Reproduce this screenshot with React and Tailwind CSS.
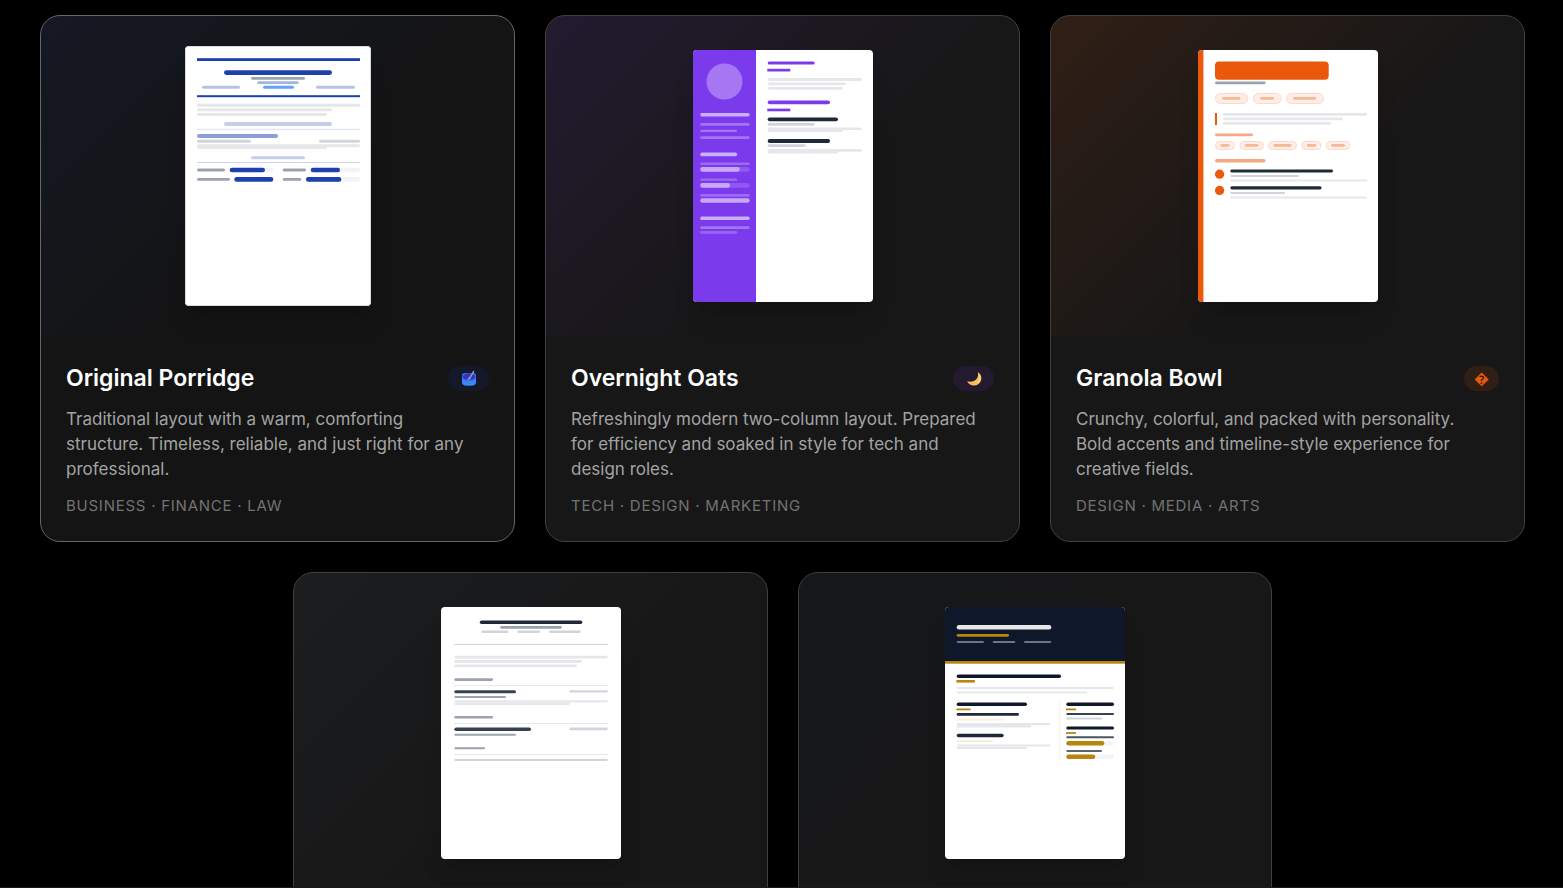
import React from 'react';
import clsx from 'clsx';

const BLUE = '#1e40af';
const PURPLE = '#7c3aed';
const ORANGE = '#ea580c';
const GOLD = '#b8860b';
const NAVY = '#0f172a';
const INK = '#1f2937';
const TEXT = '#e5e7eb';
const META = '#d1d5db';
const MUTED = '#9ca3af';
const TRACK = '#f3f4f6';

// Every bar is [x, y, width, height, fill]
const Bars = ({ items, square }) =>
    items.map(([x, y, w, h, fill], i) => (
        <rect key={i} x={x} y={y} width={w} height={h} rx={square ? 0 : h / 2} fill={fill} />
    ));

const Pill = ({ x, y, w, h, bar }) => (
    <>
        <rect x={x + 0.5} y={y + 0.5} width={w - 1} height={h - 1} rx={(h - 1) / 2} fill="#fdefe8" stroke="#fbdaca" />
        <rect x={bar[0]} y={y + h / 2 - 1.6} width={bar[1]} height={2.8} rx={1.4} fill="#f6b896" />
    </>
);

const PorridgeSheet = () => (
    <svg viewBox="0 0 186 260" className="h-[260px] w-[186px] rounded bg-white shadow-xl" aria-hidden="true">
        <rect x="0.5" y="0.5" width="185" height="259" rx="3.5" fill="#fff" stroke="#d9dadc" />
        <Bars square items={[
            [12, 12.2, 163, 2.8, BLUE],
            [12, 49.2, 163, 2, BLUE],
            [12, 82.8, 163, 1, '#d9dff1'],
            [12, 116, 163, 1, '#cdd5ec'],
        ]} />
        <Bars items={[
            [39, 24.2, 108, 4.7, BLUE],
            [66, 31, 54, 2.8, MUTED],
            [72.3, 35.2, 41.4, 2.9, '#a5b3df'],
            [17, 39.8, 38, 3, '#b8c1e4'],
            [78, 39.8, 31, 3, '#60a5fa'],
            [131, 39.8, 39, 3, '#b8c1e4'],
            [12, 57.7, 163, 3, TEXT],
            [12, 62.2, 135, 3, TEXT],
            [12, 66.9, 130, 3, TEXT],
            [39, 76.1, 108, 3.9, '#c5cdea'],
            [12, 88, 81, 4, '#8e9fd7'],
            [12, 93.8, 54, 2.9, META],
            [134, 93.8, 41, 2.9, META],
            [12, 98.3, 163, 2.9, TEXT],
            [12, 100.4, 130, 2.7, TEXT],
            [66, 110.3, 54, 3, '#c5cdea'],
            [12, 122.6, 28, 2.8, MUTED],
            [44.7, 121.7, 43.6, 4.6, TRACK],
            [44.7, 121.7, 35.3, 4.6, BLUE],
            [97.7, 122.6, 23.3, 2.8, MUTED],
            [125.7, 121.7, 49.3, 4.6, TRACK],
            [125.7, 121.7, 29.3, 4.6, BLUE],
            [12, 132, 33, 2.8, MUTED],
            [49.3, 131.1, 39, 4.6, BLUE],
            [97.7, 132, 18.6, 2.8, MUTED],
            [121, 131.1, 54, 4.6, TRACK],
            [121, 131.1, 35.3, 4.6, BLUE],
        ]} />
    </svg>
);

const OatsSheet = () => (
    <svg viewBox="0 0 180 252" className="h-[252px] w-[180px] rounded bg-white shadow-xl" aria-hidden="true">
        <rect width="63" height="252" fill={PURPLE} />
        <circle cx="31.5" cy="31.5" r="18" fill="#a577f2" />
        <Bars items={[
            [7.2, 63, 49.5, 3.6, '#cbb0f8'],
            [7.2, 73.1, 49.5, 2.7, '#a375f2'],
            [7.2, 79.7, 37, 2.2, '#a375f2'],
            [7.2, 86.3, 49.5, 2.7, '#a375f2'],
            [7.2, 102.6, 37, 3.6, '#cbb0f8'],
            [7.2, 112.4, 49.5, 2.6, '#9c6bf1'],
            [7.2, 117.1, 49.5, 4.6, '#8f58f0'],
            [7.2, 117.1, 39.6, 4.6, '#c6a8f7'],
            [7.2, 128.5, 37, 2.3, '#9c6bf1'],
            [7.2, 133.1, 49.5, 4.6, '#8f58f0'],
            [7.2, 133.1, 29.8, 4.6, '#c6a8f7'],
            [7.2, 144, 49.5, 2.7, '#9c6bf1'],
            [7.2, 148.2, 49.5, 4.6, '#c6a8f7'],
            [7.2, 166.4, 49.5, 3.6, '#cbb0f8'],
            [7.2, 176.3, 49.5, 2.7, '#a375f2'],
            [7.2, 181.1, 37, 2.6, '#9864f1'],
            [74.7, 11.5, 47, 3, PURPLE],
            [74.7, 28.1, 94.3, 2.8, TEXT],
            [74.7, 32.5, 78.3, 2.7, TEXT],
            [74.7, 36.9, 75.3, 2.8, TEXT],
            [74.7, 50.4, 62.3, 3.8, PURPLE],
            [74.7, 67.4, 70.3, 3.8, INK],
            [74.7, 73, 47, 2.7, META],
            [74.7, 77.4, 94.3, 2.7, TEXT],
            [74.7, 79.4, 75.3, 2.6, TEXT],
            [74.7, 89.1, 62.3, 3.8, INK],
            [74.7, 94.3, 38, 2.6, META],
            [74.7, 99, 94.3, 2.7, TEXT],
            [74.7, 101, 70.3, 2.6, TEXT],
        ]} />
        <Bars square items={[
            [74.3, 18.8, 23, 2.7, PURPLE],
            [74.3, 58.6, 23, 2.7, PURPLE],
        ]} />
    </svg>
);

const GranolaSheet = () => (
    <svg viewBox="0 0 180 252" className="h-[252px] w-[180px] rounded bg-white shadow-xl" aria-hidden="true">
        <rect width="5.4" height="252" fill={ORANGE} />
        <rect x="17" y="11.5" width="113.7" height="18.2" rx="4" fill={ORANGE} />
        <Bars items={[[17, 31.5, 50.6, 2.7, MUTED]]} />
        <Pill x={17} y={43} w={33.3} h={11} bar={[24.2, 18.2]} />
        <Pill x={55} y={43} w={28.7} h={11} bar={[62, 14]} />
        <Pill x={88} y={43} w={38} h={11} bar={[95, 23]} />
        <rect x="17" y="63" width="2" height="12" fill={ORANGE} />
        <Bars items={[
            [25, 63, 144, 2.7, TEXT],
            [25, 67.5, 120, 2.7, TEXT],
            [25, 72, 108, 2.7, TEXT],
            [17, 83.5, 38, 2.8, '#f5a983'],
            [17, 108.9, 50.6, 3.5, '#f5a983'],
        ]} />
        <Pill x={17} y={91} w={20} h={9} bar={[22.3, 9.4]} />
        <Pill x={41.4} y={91} w={24.6} h={9} bar={[46.6, 13.8]} />
        <Pill x={70} y={91} w={29} h={9} bar={[75.4, 18.4]} />
        <Pill x={103.4} y={91} w={20} h={9} bar={[108.8, 9.4]} />
        <Pill x={127.8} y={91} w={24.6} h={9} bar={[133, 14]} />
        <circle cx="21.6" cy="124.2" r="4.6" fill={ORANGE} />
        <rect x="21" y="130" width="1.4" height="1.6" fill="#fbdaca" />
        <circle cx="21.6" cy="140.4" r="4.6" fill={ORANGE} />
        <Bars items={[
            [32.3, 119.6, 102.7, 2.9, INK],
            [32.3, 125, 68.7, 2, META],
            [32.3, 129.6, 136.7, 1.9, TEXT],
            [32.3, 136.2, 91.3, 3.2, INK],
            [32.3, 142, 54.7, 1.9, META],
            [32.3, 146.6, 136.7, 1.9, TEXT],
        ]} />
    </svg>
);

const MinimalSheet = () => (
    <svg viewBox="0 0 180 252" className="h-[252px] w-[180px] rounded bg-white shadow-xl" aria-hidden="true">
        <Bars square items={[
            [13, 37, 154, 1, META],
            [13, 78, 154, 1, TEXT],
            [13, 116, 154, 1, TEXT],
            [13, 147, 154, 1, TEXT],
        ]} />
        <Bars items={[
            [38.8, 13.5, 102.5, 3.5, INK],
            [59.2, 19, 61.6, 2.7, MUTED],
            [40.3, 23.4, 27.3, 2.7, META],
            [76.3, 23.4, 22.7, 2.7, META],
            [108, 23.4, 31.7, 2.7, META],
            [13.3, 48.7, 153.4, 2.7, TEXT],
            [13.3, 53.1, 127.7, 2.8, TEXT],
            [13.3, 57.6, 122.7, 2.7, TEXT],
            [13.3, 71.2, 38.7, 2.7, MUTED],
            [13.3, 83.2, 61.7, 3, '#374151'],
            [128.4, 83.3, 38.3, 2.2, META],
            [13.3, 89, 51.7, 2, MUTED],
            [13.3, 93.3, 153.4, 2.2, TEXT],
            [13.3, 95.4, 115.7, 2.5, TEXT],
            [13.3, 108.9, 38.7, 2.7, MUTED],
            [13.3, 120.6, 76.7, 3.5, '#374151'],
            [128.4, 120.6, 38.3, 2.6, META],
            [13.3, 126.8, 61.7, 2, MUTED],
            [13.3, 140.2, 30.7, 2, MUTED],
            [13.3, 152, 153.4, 1.9, META],
        ]} />
    </svg>
);

const ExecutiveSheet = () => (
    <svg viewBox="0 0 180 252" className="h-[252px] w-[180px] rounded bg-white shadow-xl" aria-hidden="true">
        <rect width="180" height="54" fill={NAVY} />
        <rect y="54" width="180" height="2.7" fill={GOLD} />
        <Bars items={[
            [11.7, 18, 94.6, 4.5, '#e7e8ea'],
            [11.7, 27, 52.3, 2.7, GOLD],
            [11.7, 34, 27.3, 2, '#6f7480'],
            [47.7, 34, 22.6, 2, '#6f7480'],
            [79, 34, 27.3, 2, '#6f7480'],
            [11.7, 67.5, 104.3, 3.5, NAVY],
            [11.7, 80, 157.3, 2.1, TEXT],
            [11.7, 84.5, 130.3, 2, TEXT],
            [11.7, 95.5, 70.3, 3.5, NAVY],
            [11.7, 106.1, 62.3, 2.6, INK],
            [11.7, 111.6, 47, 1.8, '#f8f0de'],
            [11.7, 116, 93.6, 2.2, TEXT],
            [11.7, 118, 74.3, 2.6, TEXT],
            [11.7, 126.8, 47, 3.5, INK],
            [11.7, 133.1, 37, 1.8, '#f8f0de'],
            [11.7, 137.6, 93.6, 2, TEXT],
            [11.7, 139.7, 70.3, 2.3, TEXT],
            [121.3, 95.5, 47.7, 3.5, NAVY],
            [121.3, 106.1, 47.7, 2, '#374151'],
            [121.3, 110.6, 35.7, 1.9, META],
            [121.3, 119.4, 47.7, 3.2, NAVY],
            [121.3, 129.3, 47.7, 2, '#4b5563'],
            [121.3, 134, 47.7, 4.5, TRACK],
            [121.3, 134, 38, 4.5, GOLD],
            [121.3, 143, 35.7, 2, '#5b6472'],
            [121.3, 147.4, 47.7, 4.5, TRACK],
            [121.3, 147.4, 29, 4.5, GOLD],
        ]} />
        <Bars square items={[
            [11.4, 73, 18.4, 2.6, GOLD],
            [11.4, 101.5, 14.3, 1.8, GOLD],
            [121, 101.5, 10, 1.8, GOLD],
            [121, 125, 10, 2, '#c0932a'],
            [114.2, 95, 1, 57, '#f8efdf'],
        ]} />
    </svg>
);

const BowlIcon = () => (
    <svg viewBox="0 0 21 17" className="h-[17px] w-[21px]" role="img" aria-label="Bowl">
        <path d="M4 6.2Q4 3 7 3h8q3 0 3 3.2v5.3q0 4-4.200 4H8.200q-4.200 0-4.200-4z" fill="#3478f0" />
        <ellipse cx="11" cy="6.800" rx="6.200" ry="3.500" fill="#3432c4" />
        <path d="M4 8.500q1.500 2.600 7 2.600t7-2.600v3q0 4-4.200 4H8.200q-4.200 0-4.200-4z" fill="#3b82f6" />
        <path d="M6 13.500q5 2 10 0" stroke="#2f95f8" strokeWidth="1.200" fill="none" />
        <path d="M15.600 1.600 12.500 7" stroke="#a3a3b5" strokeWidth="1.400" strokeLinecap="round" />
        <path d="M12.800 6.300q.9 1.700-.4 3-1.600 1.200-4 .9 1.200-1 1.700-2.200.9-1.800 2.700-1.700z" fill="#8d8da8" />
    </svg>
);

const MoonIcon = () => (
    <svg viewBox="0 0 21 17" className="h-[17px] w-[21px]" role="img" aria-label="Moon">
        <path d="M14.800 2C19.400 4.600 19.600 11.500 15.200 14.300 11.600 16.600 6.300 15.600 4 11.300c3.200 1 6.900.5 9-1.700 2-2 2.600-4.800 1.800-7.600z" fill="#fbbf62" />
        <path d="M16 3.800c2.400 3.200 1.600 7.600-1.800 9.700 2.300-2.900 2.800-6.300 1.800-9.700z" fill="#fcdc98" />
        <path d="M5.200 12.600c2.700 1.600 5.600 1.500 7.900 0" stroke="#f7a74d" strokeWidth=".8" fill="none" />
    </svg>
);

const templates = [
    {
        name: 'Original Porridge',
        description: 'Traditional layout with a warm, comforting structure. Timeless, reliable, and just right for any professional.',
        tags: 'Business · Finance · Law',
        badge: <BowlIcon />,
        badgeClass: 'bg-[#151828] text-blue-800',
        tint: 'from-[#1e40af]/10',
        sheet: <PorridgeSheet />,
        active: true,
    },
    {
        name: 'Overnight Oats',
        description: 'Refreshingly modern two-column layout. Prepared for efficiency and soaked in style for tech and design roles.',
        tags: 'Tech · Design · Marketing',
        badge: <MoonIcon />,
        badgeClass: 'bg-[#231a30] text-violet-600',
        tint: 'from-[#7c3aed]/12',
        sheet: <OatsSheet />,
    },
    {
        name: 'Granola Bowl',
        description: 'Crunchy, colorful, and packed with personality. Bold accents and timeline-style experience for creative fields.',
        tags: 'Design · Media · Arts',
        badge: '\uFFFD',
        badgeClass: 'bg-[#301f16] text-[#ea580c]',
        tint: 'from-[#ea580c]/12',
        sheet: <GranolaSheet />,
    },
    { id: 'minimal', tint: 'from-[#374151]/15', sheet: <MinimalSheet /> },
    { id: 'executive', tint: 'from-[#0f172a]/15', sheet: <ExecutiveSheet /> },
];

const TemplateCard = ({ template }) => (
    <article
        className={clsx(
            'min-h-[527px] w-[calc((100%-60px)/3)] shrink-0 overflow-hidden rounded-[20px] border',
            template.active ? 'border-[#666] bg-[#141414]' : 'border-[#404040] bg-[#171717]'
        )}
    >
        <div className={clsx('flex h-80 items-center justify-center bg-linear-135 to-transparent to-60% pl-px', template.tint)}>
            {template.sheet}
        </div>
        {template.name && (
            <div className="px-[25px] pt-[30px] pb-[25px]">
                <div className="mb-4 flex h-[25px] items-center justify-between">
                    <h3 className="text-[23px] leading-[25px] font-semibold text-white">{template.name}</h3>
                    <span className={clsx('flex h-[25px] items-center rounded-full px-[10px] text-[15px] leading-5', template.badgeClass)}>
                        {template.badge}
                    </span>
                </div>
                <p className="mb-3.5 pr-2 text-[17px] leading-[25px] text-[#a3a3a3]">{template.description}</p>
                <p className="text-[15px] leading-5 tracking-wider text-[#737373] uppercase">{template.tags}</p>
            </div>
        )}
    </article>
);

const App = () => (
    <main className="h-screen overflow-hidden border-b border-[#1a1a1a] bg-black pt-[15px] pr-[38px] pl-10 font-['Inter',sans-serif]">
        <section className="flex flex-wrap items-start justify-center gap-[30px]" aria-label="Templates">
            {templates.map((template) => (
                <TemplateCard key={template.name || template.id} template={template} />
            ))}
        </section>
    </main>
);

export default App;
